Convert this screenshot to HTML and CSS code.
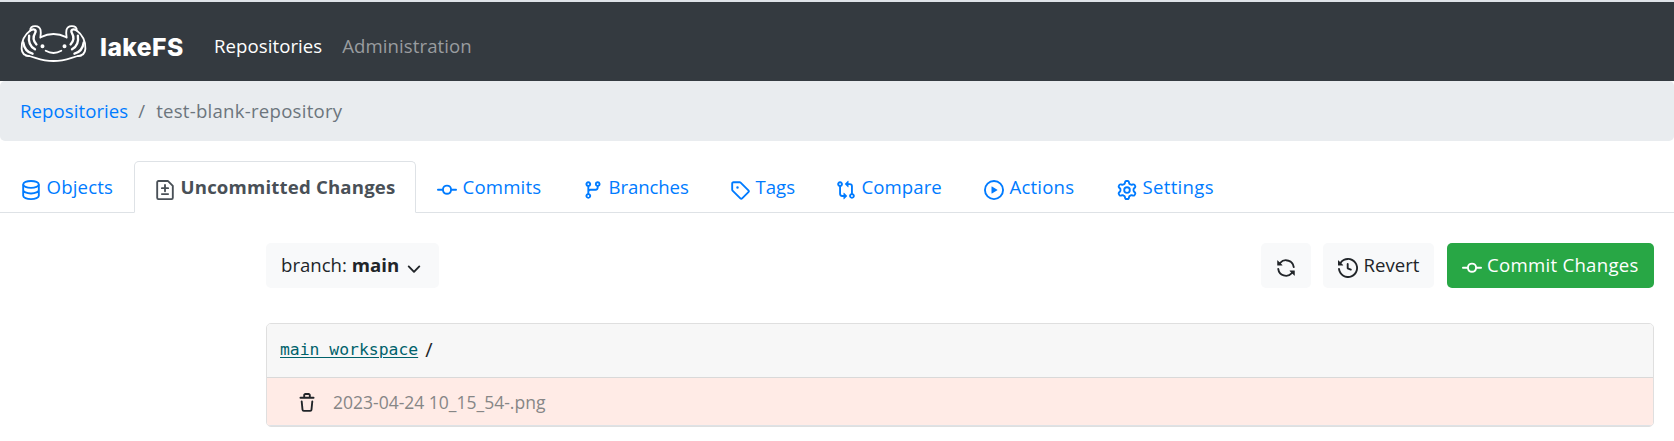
FILE: index.html
```html
<!DOCTYPE html>
<html lang="en">
<head>
<meta charset="utf-8">
<title>lakeFS</title>
<link rel="stylesheet" href="styles.css">
</head>
<body>
<svg class="defs" aria-hidden="true">
<symbol id="commit" viewBox="0 0 16 16"><path fill-rule="evenodd" d="M10.5 7.75a2.5 2.5 0 11-5 0 2.5 2.5 0 015 0zm1.43.75a4.002 4.002 0 01-7.86 0H.75a.75.75 0 110-1.5h3.32a4.001 4.001 0 017.86 0h3.32a.75.75 0 110 1.5h-3.32z"/></symbol>
</svg>
<header class="navbar">
  <a class="brand">
    <svg class="mascot" viewBox="0 0 68 40" fill="none" stroke="#fff" stroke-width="1.9" stroke-linecap="round" stroke-linejoin="round">
      <path id="brow" d="M21 13.500Q34 7 47 13.500"/>
      <path d="M6 32.500C14 33 20 38 34 38C48 38 54 33 62 32.500"/>
      <g id="gill">
        <path d="M20.500 14C21 10 22.500 2.500 15.500 2.200C12 2 9.500 4 10.500 6.500C4.500 11 1 18 1.300 25.500C1.600 30 4 32.500 9 33"/>
        <path stroke-width="2.400" d="M10.500 6.500C14 4.500 17 6 15 9.500C12.500 13.500 13 17 16.500 21M9 12C8 18 10 23 15 26M3 19C4 26 7 29 12.500 30.500"/>
      </g>
      <use href="#gill" transform="matrix(-1 0 0 1 68 0)"/>
      <path d="M26 27.500Q34 32 42 27.500"/>
      <circle cx="22.700" cy="22.700" r="1.100" fill="#fff"/><circle cx="45.300" cy="22.700" r="1.100" fill="#fff"/>
    </svg>
    <span class="wordmark">lakeFS</span>
  </a>
  <nav class="nav-links"><a class="active">Repositories</a><a class="admin">Administration</a></nav>
</header>
<div class="breadcrumb"><a>Repositories</a><span class="sep">/</span><span class="repo">test-blank-repository</span></div>
<nav class="tabs">
  <a class="tab objects"><svg class="icon" viewBox="0 0 16 16"><g fill="none" stroke="currentColor" stroke-width="1.5"><ellipse cx="8" cy="3.500" rx="6.250" ry="2.750"/><path d="M1.750 3.500v9c0 1.500 2.800 2.750 6.250 2.750s6.250-1.250 6.250-2.750v-9M1.750 8c0 1.500 2.800 2.750 6.250 2.750S14.250 9.500 14.250 8"/></g></svg><span>Objects</span></a>
  <a class="tab changes"><svg class="icon" viewBox="0 0 16 16"><path fill="none" stroke="currentColor" stroke-width="1.500" stroke-linecap="round" stroke-linejoin="round" d="M2.750.750h7.500l4 4v9.500a1 1 0 01-1 1H2.750a1 1 0 01-1-1V1.750a1 1 0 011-1zM8 4v5M5.500 6.500h5M5.500 11.250h5"/></svg><span>Uncommitted Changes</span></a>
  <a class="tab commits"><svg class="icon"><use href="#commit"/></svg><span>Commits</span></a>
  <a class="tab branches"><svg class="icon" viewBox="0 0 16 16"><path fill-rule="evenodd" d="M11.750 2.500a.75.75 0 100 1.500.75.75 0 000-1.500zm-2.250.75a2.250 2.250 0 113 2.122V6A2.500 2.500 0 0110 8.500H6a1 1 0 00-1 1v1.128a2.251 2.251 0 11-1.500 0V5.372a2.250 2.250 0 111.500 0v1.836A2.492 2.492 0 016 7h4a1 1 0 001-1v-.628A2.250 2.250 0 019.500 3.250zM4.250 12a.75.75 0 100 1.500.75.75 0 000-1.500zM3.500 3.250a.75.75 0 111.500 0 .75.75 0 01-1.500 0z"/></svg><span>Branches</span></a>
  <a class="tab tags"><svg class="icon" viewBox="0 0 16 16"><path fill-rule="evenodd" d="M2.500 7.775V2.750a.25.25 0 01.25-.25h5.025a.25.25 0 01.177.073l6.250 6.250a.25.25 0 010 .354l-5.025 5.025a.25.25 0 01-.354 0l-6.250-6.250a.25.25 0 01-.073-.177zm-1.500 0V2.750C1 1.784 1.784 1 2.750 1h5.025c.464 0 .91.184 1.238.513l6.250 6.250a1.750 1.750 0 010 2.474l-5.026 5.026a1.750 1.750 0 01-2.474 0l-6.250-6.250A1.750 1.750 0 011 7.775zM6 5a1 1 0 100 2 1 1 0 000-2z"/></svg><span>Tags</span></a>
  <a class="tab compare"><svg class="icon" viewBox="0 0 16 16"><path fill-rule="evenodd" d="M9.573.677L7.177 3.073a.25.25 0 000 .354l2.396 2.396A.25.25 0 0010 5.646V4h1a1 1 0 011 1v5.628a2.251 2.251 0 101.500 0V5A2.500 2.500 0 0011 2.500h-1V.854a.25.25 0 00-.427-.177zM6 12v-1.646a.25.25 0 01.427-.177l2.396 2.396a.25.25 0 010 .354l-2.396 2.396A.25.25 0 016 15.146V13.500H5A2.500 2.500 0 012.500 11V5.372a2.250 2.250 0 111.500 0V11a1 1 0 001 1h1zm6.750 0a.75.75 0 100 1.500.75.75 0 000-1.500zM4 3.250a.75.75 0 11-1.500 0 .75.75 0 011.500 0z"/></svg><span>Compare</span></a>
  <a class="tab actions"><svg class="icon" viewBox="0 0 16 16"><path fill-rule="evenodd" d="M1.500 8a6.500 6.500 0 1113 0 6.500 6.500 0 01-13 0zM8 0a8 8 0 100 16A8 8 0 008 0zM6.379 5.227A.25.25 0 006 5.442v5.117a.25.25 0 00.379.214l4.264-2.559a.25.25 0 000-.428L6.379 5.227z"/></svg><span>Actions</span></a>
  <a class="tab settings"><svg class="icon" viewBox="0 0 16 16"><path fill-rule="evenodd" d="M7.429 1.525a6.593 6.593 0 011.142 0c.036.003.108.036.137.146l.289 1.105c.147.56.55.967.997 1.189.174.086.341.183.501.29.417.278.97.423 1.53.27l1.102-.303c.11-.03.175.016.195.046.219.31.41.641.573.989.014.031.022.11-.059.19l-.815.806c-.411.406-.562.957-.53 1.456a4.588 4.588 0 010 .582c-.032.499.119 1.05.53 1.456l.815.806c.08.08.073.159.059.19a6.494 6.494 0 01-.573.99c-.02.029-.086.074-.195.045l-1.103-.303c-.559-.153-1.112-.008-1.529.27-.16.107-.327.204-.5.29-.449.222-.851.628-.998 1.189l-.289 1.105c-.029.11-.101.143-.137.146a6.613 6.613 0 01-1.142 0c-.036-.003-.108-.037-.137-.146l-.289-1.105c-.147-.56-.55-.967-.997-1.189a4.502 4.502 0 01-.501-.29c-.417-.278-.97-.423-1.53-.27l-1.102.303c-.11.03-.175-.016-.195-.046a6.492 6.492 0 01-.573-.989c-.014-.031-.022-.11.059-.19l.815-.806c.411-.406.562-.957.53-1.456a4.587 4.587 0 010-.582c.032-.499-.119-1.05-.53-1.456l-.815-.806c-.08-.08-.073-.159-.059-.19a6.44 6.44 0 01.573-.99c.02-.029.086-.075.195-.045l1.103.303c.559.153 1.112.008 1.529-.27.16-.107.327-.204.5-.29.449-.222.851-.628.998-1.189l.289-1.105c.029-.11.101-.143.137-.146zM8 0c-.236 0-.47.01-.701.03-.743.065-1.29.615-1.458 1.261l-.29 1.106c-.017.066-.078.158-.211.224a5.994 5.994 0 00-.668.386c-.123.082-.233.09-.3.071L3.27 2.776c-.644-.177-1.392.02-1.82.63a7.977 7.977 0 00-.704 1.217c-.315.675-.111 1.422.363 1.891l.815.806c.05.048.098.147.088.294a6.084 6.084 0 000 .772c.01.147-.038.246-.088.294l-.815.806c-.474.469-.678 1.216-.363 1.891.2.428.436.835.704 1.218.428.609 1.176.806 1.82.63l1.103-.303c.066-.019.176-.011.299.071.213.143.436.272.668.386.133.066.194.158.212.224l.289 1.106c.169.646.715 1.196 1.458 1.26a8.094 8.094 0 001.402 0c.743-.064 1.29-.614 1.458-1.26l.29-1.106c.017-.066.078-.158.211-.224a5.98 5.98 0 00.668-.386c.123-.082.233-.09.3-.071l1.102.302c.644.177 1.392-.02 1.82-.63.268-.382.505-.789.704-1.217.315-.675.111-1.422-.364-1.891l-.814-.806c-.05-.048-.098-.147-.088-.294a6.1 6.1 0 000-.772c-.01-.147.039-.246.088-.294l.814-.806c.475-.469.679-1.216.364-1.891a7.992 7.992 0 00-.704-1.218c-.428-.609-1.176-.806-1.82-.63l-1.103.303c-.066.019-.176.011-.299-.071a5.991 5.991 0 00-.668-.386c-.133-.066-.194-.158-.212-.224L10.16 1.29C9.99.645 9.444.095 8.701.031A8.094 8.094 0 008 0zm1.5 8a1.5 1.5 0 11-3 0 1.5 1.5 0 013 0zM11 8a3 3 0 11-6 0 3 3 0 016 0z"/></svg><span>Settings</span></a>
</nav>
<main class="content">
  <div class="toolbar">
    <button class="btn branch"><span>branch: <b>main</b></span><svg class="icon" viewBox="0 0 16 16"><path d="M12.780 6.220a.75.75 0 010 1.060l-4.250 4.250a.75.75 0 01-1.060 0L3.220 7.280a.75.75 0 011.060-1.060L8 9.940l3.720-3.720a.75.75 0 011.060 0z"/></svg></button>
    <div class="actions-group">
      <button class="btn refresh" aria-label="Refresh"><svg class="icon" viewBox="0 0 16 16"><path d="M8 2.500a5.487 5.487 0 00-4.131 1.869l1.204 1.204A.25.25 0 014.896 6H1.250A.25.25 0 011 5.750V2.104a.25.25 0 01.427-.177l1.380 1.380A7.001 7.001 0 0114.950 7.160a.75.75 0 11-1.490.178A5.501 5.501 0 008 2.500zM1.705 8.005a.75.75 0 01.834.656 5.501 5.501 0 009.592 2.970l-1.204-1.204a.25.25 0 01.177-.427h3.646a.25.25 0 01.25.25v3.646a.25.25 0 01-.427.177l-1.380-1.380A7.001 7.001 0 011.050 8.840a.75.75 0 01.656-.834z"/></svg></button>
      <button class="btn revert"><svg class="icon" viewBox="0 0 16 16"><path d="M1.643 3.143L.427 1.927A.25.25 0 000 2.104V5.750c0 .138.112.25.25.25h3.646a.25.25 0 00.177-.427L2.715 4.215a6.500 6.500 0 11-1.180 4.458.75.75 0 10-1.493.154 8.001 8.001 0 101.600-5.684zM7.750 4a.75.75 0 01.75.75v2.992l2.028.812a.75.75 0 01-.557 1.392l-2.500-1A.75.75 0 017 8.250v-3.500A.75.75 0 017.750 4z"/></svg><span>Revert</span></button>
      <button class="btn success"><svg class="icon"><use href="#commit"/></svg><span>Commit Changes</span></button>
    </div>
  </div>
  <section class="card">
    <div class="card-header"><a>main workspace</a><span>/</span></div>
    <div class="row"><svg class="icon" viewBox="0 0 16 16"><path fill-rule="evenodd" d="M6.500 1.750a.25.25 0 01.25-.25h2.500a.25.25 0 01.25.25V3h-3V1.750zm4.500 0V3h2.250a.75.75 0 010 1.500H2.750a.75.75 0 010-1.500H5V1.750C5 .784 5.784 0 6.750 0h2.500C10.216 0 11 .784 11 1.750zM4.496 6.675a.75.75 0 10-1.492.15l.66 6.600A1.750 1.750 0 005.405 15h5.190c.9 0 1.652-.681 1.741-1.576l.66-6.600a.75.75 0 00-1.492-.149l-.66 6.600a.25.25 0 01-.249.225h-5.190a.25.25 0 01-.249-.225l-.66-6.600z"/></svg><span>2023-04-24 10_15_54-.png</span></div>
  </section>
</main>
</body>
</html>
```
FILE: styles.css
```css
* { box-sizing: border-box; }
body { margin: 0; background: #fff; color: #212529; font: 18.6px/30px "Open Sans", "Noto Sans", sans-serif; white-space: nowrap; overflow: hidden; }
.defs { position: absolute; width: 0; height: 0; }
.icon { width: 20px; height: 20px; fill: currentColor; flex: none; }

.navbar { height: 81px; padding: 0 20px; background: #343a40; border-top: 2px solid #dfe3e8; display: flex; }
.brand { width: 194px; display: flex; color: #fff; }
.mascot { width: 67px; height: 39px; margin-top: 22px; }
.wordmark { font: 800 24.7px/30px Inter, sans-serif; letter-spacing: .4px; margin: 30px 0 0 13px; }
.nav-links { display: flex; gap: 20px; padding-top: 29px; color: #999c9f; letter-spacing: .07px; }
.nav-links .active { color: #fff; }

.breadcrumb { height: 60px; padding: 15px 20px; background: #e9ecef; border-radius: 5px; color: #6c757d; display: flex; letter-spacing: .07px; }
.breadcrumb a { color: #007bff; }
.sep { margin: 0 11px 0 10px; }
.repo { letter-spacing: .25px; }

.tabs { display: flex; margin-top: 20px; height: 52px; border-bottom: 1px solid #dee2e6; color: #007bff; letter-spacing: .18px; }
.tab { height: 52px; display: flex; gap: 5.5px; padding: 11px 0 0 21px; }
.tab .icon { margin-top: 8px; }
.objects { width: 134px; }
.changes { width: 282px; padding: 10px 0 0 20px; border: 1px solid #dee2e6; border-bottom-color: #fff; border-radius: 5px 5px 0 0; color: #495057; font-weight: 700; }
.commits { width: 146px; }
.branches { width: 147px; letter-spacing: -.1px; }
.tags { width: 106px; letter-spacing: 0; }
.compare { width: 148px; letter-spacing: .07px; }
.actions { width: 133px; }
.settings { letter-spacing: .3px; }

.content { padding: 30px 20px 0 266px; }
.toolbar { display: flex; justify-content: space-between; }
.btn { height: 45px; border: 0; border-radius: 5px; background: #f8f9fa; color: #212529; font: inherit; padding: 7px 15px 8px; display: flex; }
.btn .icon { margin-top: 8px; }
.branch { width: 173px; }
.branch .icon { margin-left: 5px; }
.actions-group { display: flex; }
.refresh { width: 50px; }
.revert { width: 111px; gap: 5.5px; margin: 0 13px 0 12px; }
.success { width: 207px; gap: 5px; background: #28a745; color: #fff; letter-spacing: .28px; }

.card { margin-top: 35px; height: 104px; border: 1px solid #dfdfdf; border-radius: 5px; overflow: hidden; }
.card-header { height: 54px; padding: 11px 13px; background: #f7f7f7; border-bottom: 1px solid #d9d9d9; display: flex; gap: 7px; font-size: 20px; }
.card-header a { font: 16.4px/30px "DejaVu Sans Mono", monospace; color: #00626b; text-decoration: underline; text-underline-offset: 2px; }
.row { height: 48px; padding: 9px 0 0 30px; background: #ffebe6; border-bottom: 1px solid #dee2e6; display: flex; gap: 16px; color: #868686; font-size: 17.5px; }
.row .icon { color: #212529; margin-top: 6px; }
```
